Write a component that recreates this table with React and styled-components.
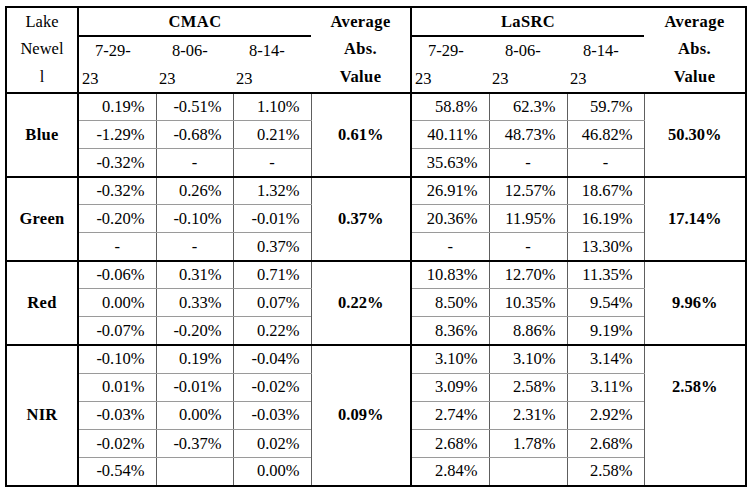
import React from "react";
import styled, { createGlobalStyle } from "styled-components";

const Global = createGlobalStyle`
  html, body { margin: 0; padding: 0; background: #fff; }
`;

const Table = styled.table`
  border-collapse: collapse;
  table-layout: fixed;
  width: 740px;
  margin: 6px 0 0 5px;
  border: 2px solid #000;
  font-family: "Liberation Serif", "Times New Roman", serif;
  font-size: 16.5px;
  color: #000;
`;

const HeadRow = styled.tr`
  height: ${(p) => p.$h}px;
`;

const HeadCell = styled.th`
  padding: 0;
  font-size: 16.5px;
  font-weight: ${(p) => (p.$bold ? 700 : 400)};
  letter-spacing: ${(p) => (p.$bold ? "0.4px" : "0")};
  text-align: ${(p) => p.$align || "center"};
  vertical-align: top;
  line-height: 27.3px;
  border-bottom: 2px solid #000;
  border-right: ${(p) => (p.$divider ? "2px solid #000" : "none")};
`;

const DateLine = styled.span`
  display: block;
  padding-left: ${(p) => p.$indent}px;
  text-align: left;
`;

const BodyRow = styled.tr`
  height: ${(p) => p.$h}px;
`;

const Label = styled.td`
  padding: 0;
  font-size: 16.5px;
  letter-spacing: 0.3px;
  text-align: center;
  vertical-align: middle;
  font-weight: 700;
  border-top: 2px solid #000;
  border-right: 2px solid #000;
`;

const Num = styled.td`
  padding: 0 ${(p) => (p.$dash ? 0 : 11)}px 0 0;
  font-size: 16.5px;
  text-align: ${(p) => (p.$dash ? "center" : "right")};
  vertical-align: middle;
  line-height: 18px;
  border-left: 1px solid #5e5e5e;
  border-right: 1px solid #5e5e5e;
  border-top: ${(p) => (p.$first ? "2px solid #000" : "1px solid #9a9a9a")};
  border-bottom: 1px solid #9a9a9a;
`;

const Avg = styled.td`
  padding: ${(p) => (p.$second ? "27px 0 0" : "0")};
  font-size: 16.5px;
  text-align: center;
  vertical-align: ${(p) => (p.$second ? "top" : "middle")};
  line-height: 28px;
  font-weight: 700;
  border-top: 2px solid #000;
  border-left: 1px solid #5e5e5e;
  border-right: 2px solid #000;
`;

const groups = [
  {
    label: "Blue",
    cmac: [
      ["0.19%", "-0.51%", "1.10%"],
      ["-1.29%", "-0.68%", "0.21%"],
      ["-0.32%", "-", "-"],
    ],
    cmacAvg: "0.61%",
    lasrc: [
      ["58.8%", "62.3%", "59.7%"],
      ["40.11%", "48.73%", "46.82%"],
      ["35.63%", "-", "-"],
    ],
    lasrcAvg: "50.30%",
  },
  {
    label: "Green",
    cmac: [
      ["-0.32%", "0.26%", "1.32%"],
      ["-0.20%", "-0.10%", "-0.01%"],
      ["-", "-", "0.37%"],
    ],
    cmacAvg: "0.37%",
    lasrc: [
      ["26.91%", "12.57%", "18.67%"],
      ["20.36%", "11.95%", "16.19%"],
      ["-", "-", "13.30%"],
    ],
    lasrcAvg: "17.14%",
  },
  {
    label: "Red",
    cmac: [
      ["-0.06%", "0.31%", "0.71%"],
      ["0.00%", "0.33%", "0.07%"],
      ["-0.07%", "-0.20%", "0.22%"],
    ],
    cmacAvg: "0.22%",
    lasrc: [
      ["10.83%", "12.70%", "11.35%"],
      ["8.50%", "10.35%", "9.54%"],
      ["8.36%", "8.86%", "9.19%"],
    ],
    lasrcAvg: "9.96%",
  },
  {
    label: "NIR",
    rowH: 28.2,
    cmac: [
      ["-0.10%", "0.19%", "-0.04%"],
      ["0.01%", "-0.01%", "-0.02%"],
      ["-0.03%", "0.00%", "-0.03%"],
      ["-0.02%", "-0.37%", "0.02%"],
      ["-0.54%", "", "0.00%"],
    ],
    cmacAvg: "0.09%",
    lasrc: [
      ["3.10%", "3.10%", "3.14%"],
      ["3.09%", "2.58%", "3.11%"],
      ["2.74%", "2.31%", "2.92%"],
      ["2.68%", "1.78%", "2.68%"],
      ["2.84%", "", "2.58%"],
    ],
    lasrcAvg: "2.58%",
    lasrcSecond: true,
  },
];

const widths = [72, 78, 77, 78, 100, 78, 78, 77, 102];
const dates = ["7-29-", "8-06-", "8-14-"];

function Cells({ values, first }) {
  return values.map((v, i) => (
    <Num key={i} $dash={v === "-" || v === ""} $first={first}>
      {v}
    </Num>
  ));
}

export default function App() {
  return (
    <>
      <Global />
      <Table>
        <colgroup>
          {widths.map((w, i) => (
            <col key={i} style={{ width: w }} />
          ))}
        </colgroup>
        <thead>
          <HeadRow $h={26}>
            <HeadCell rowSpan={2} $divider>
              Lake
              <br />
              Newel
              <br />l
            </HeadCell>
            <HeadCell colSpan={3} $bold>
              CMAC
            </HeadCell>
            <HeadCell rowSpan={2} $bold $divider>
              Average
              <br />
              Abs.
              <br />
              Value
            </HeadCell>
            <HeadCell colSpan={3} $bold>
              LaSRC
            </HeadCell>
            <HeadCell rowSpan={2} $bold>
              Average
              <br />
              Abs.
              <br />
              Value
            </HeadCell>
          </HeadRow>
          <HeadRow $h={53}>
            {[...dates, ...dates].map((d, i) => (
              <HeadCell key={i} $align="left">
                <DateLine $indent={16}>{d}</DateLine>
                <DateLine $indent={3}>23</DateLine>
              </HeadCell>
            ))}
          </HeadRow>
        </thead>
        <tbody>
          {groups.map((g) =>
            g.cmac.map((row, r) => (
              <BodyRow key={g.label + r} $h={g.rowH || 28}>
                {r === 0 && <Label rowSpan={g.cmac.length}>{g.label}</Label>}
                <Cells values={row} first={r === 0} />
                {r === 0 && <Avg rowSpan={g.cmac.length}>{g.cmacAvg}</Avg>}
                <Cells values={g.lasrc[r]} first={r === 0} />
                {r === 0 && (
                  <Avg rowSpan={g.cmac.length} $second={g.lasrcSecond}>
                    {g.lasrcAvg}
                  </Avg>
                )}
              </BodyRow>
            ))
          )}
        </tbody>
      </Table>
    </>
  );
}
